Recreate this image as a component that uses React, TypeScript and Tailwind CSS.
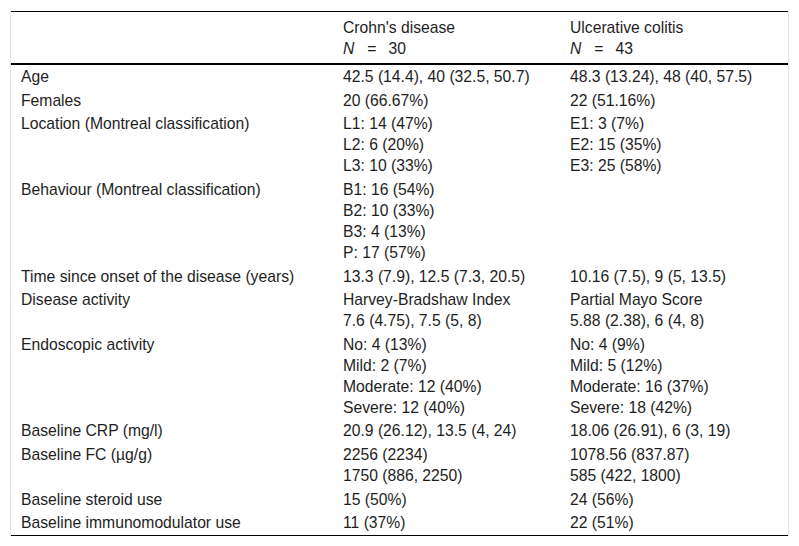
import React from 'react';

type Row = { label: string; cd: string[]; uc: string[] };

const rows: Row[] = [
  { label: 'Age', cd: ['42.5 (14.4), 40 (32.5, 50.7)'], uc: ['48.3 (13.24), 48 (40, 57.5)'] },
  { label: 'Females', cd: ['20 (66.67%)'], uc: ['22 (51.16%)'] },
  {
    label: 'Location (Montreal classification)',
    cd: ['L1: 14 (47%)', 'L2: 6 (20%)', 'L3: 10 (33%)'],
    uc: ['E1: 3 (7%)', 'E2: 15 (35%)', 'E3: 25 (58%)'],
  },
  {
    label: 'Behaviour (Montreal classification)',
    cd: ['B1: 16 (54%)', 'B2: 10 (33%)', 'B3: 4 (13%)', 'P: 17 (57%)'],
    uc: [],
  },
  { label: 'Time since onset of the disease (years)', cd: ['13.3 (7.9), 12.5 (7.3, 20.5)'], uc: ['10.16 (7.5), 9 (5, 13.5)'] },
  {
    label: 'Disease activity',
    cd: ['Harvey-Bradshaw Index', '7.6 (4.75), 7.5 (5, 8)'],
    uc: ['Partial Mayo Score', '5.88 (2.38), 6 (4, 8)'],
  },
  {
    label: 'Endoscopic activity',
    cd: ['No: 4 (13%)', 'Mild: 2 (7%)', 'Moderate: 12 (40%)', 'Severe: 12 (40%)'],
    uc: ['No: 4 (9%)', 'Mild: 5 (12%)', 'Moderate: 16 (37%)', 'Severe: 18 (42%)'],
  },
  { label: 'Baseline CRP (mg/l)', cd: ['20.9 (26.12), 13.5 (4, 24)'], uc: ['18.06 (26.91), 6 (3, 19)'] },
  {
    label: 'Baseline FC (µg/g)',
    cd: ['2256 (2234)', '1750 (886, 2250)'],
    uc: ['1078.56 (837.87)', '585 (422, 1800)'],
  },
  { label: 'Baseline steroid use', cd: ['15 (50%)'], uc: ['24 (56%)'] },
  { label: 'Baseline immunomodulator use', cd: ['11 (37%)'], uc: ['22 (51%)'] },
];

const Lines = ({ items }: { items: string[] }) => (
  <div className="flex flex-col">
    {items.map((t, i) => (
      <span key={i}>{t}</span>
    ))}
  </div>
);

const NCount = ({ n }: { n: string }) => (
  <span>
    <i>N</i>
    <span className="ml-[13px]">=</span>
    <span className="ml-[12px]">{n}</span>
  </span>
);

export default function App() {
  return (
    <div
      className="min-h-[546px] bg-white pt-[11px] text-[15.7px] leading-[21px] text-[#1e1e1e]"
      style={{ fontFamily: '"Liberation Sans", Arial, sans-serif' }}
    >
      <div className="mx-[10px] w-[779px] border-x border-[#e4e4e4]">
        <div className="border-t border-black">
          <div className="grid grid-cols-[322px_227px_1fr] border-b-2 border-black pt-[5px] pb-[4px]">
            <div />
            <div className="flex flex-col pl-[10px]">
              <span>Crohn's disease</span>
              <NCount n="30" />
            </div>
            <div className="flex flex-col pl-[10px]">
              <span>Ulcerative colitis</span>
              <NCount n="43" />
            </div>
          </div>
          <div className="border-b border-black">
            {rows.map((r) => (
              <div key={r.label} className="grid grid-cols-[322px_227px_1fr] py-[1.3px]">
                <div className="pl-[10px]">{r.label}</div>
                <div className="pl-[10px]">
                  <Lines items={r.cd} />
                </div>
                <div className="pl-[10px]">
                  <Lines items={r.uc} />
                </div>
              </div>
            ))}
          </div>
        </div>
      </div>
    </div>
  );
}
